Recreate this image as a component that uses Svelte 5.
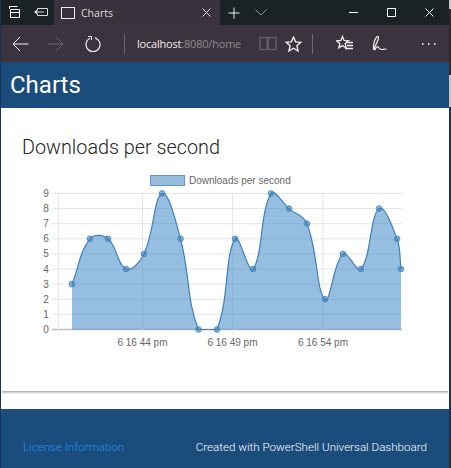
<script>
    const values = [3, 6, 6, 4, 5, 9, 6, 0, 0, 6, 4, 9, 8, 7, 2, 5, 4, 8, 6, 4];
    const xs = [72, 90, 108, 126, 144, 162, 180.5, 198.5, 217, 235, 253, 271, 289, 307, 325, 343, 361, 379, 397, 401];
    const top = 193.5;
    const bottom = 329.5;
    const step = (bottom - top) / 9;

    const points = values.map((v, i) => ({ x: xs[i], y: bottom - v * step, v }));

    // same spline as chart.js, tension 0.4
    function controls(prev, cur, next) {
        const d01 = Math.hypot(cur.x - prev.x, cur.y - prev.y);
        const d12 = Math.hypot(next.x - cur.x, next.y - cur.y);
        const s01 = d01 / (d01 + d12 || 1);
        const s12 = d12 / (d01 + d12 || 1);
        return {
            px: cur.x - 0.4 * s01 * (next.x - prev.x),
            py: cur.y - 0.4 * s01 * (next.y - prev.y),
            nx: cur.x + 0.4 * s12 * (next.x - prev.x),
            ny: cur.y + 0.4 * s12 * (next.y - prev.y),
        };
    }

    const ctrl = points.map((p, i) =>
        controls(points[i - 1] || p, p, points[i + 1] || p),
    );

    let line = `M${points[0].x} ${points[0].y}`;
    for (let i = 1; i < points.length; i++) {
        const a = ctrl[i - 1];
        const b = ctrl[i];
        const bottomClamp = (y) => Math.min(y, bottom);
        line += ` C${a.nx} ${bottomClamp(a.ny)} ${b.px} ${bottomClamp(b.py)} ${points[i].x} ${points[i].y}`;
    }
    const area = `${line} L401 ${bottom} L72 ${bottom} Z`;

    const ticks = [9, 8, 7, 6, 5, 4, 3, 2, 1, 0];
    const vlines = [58.5, 142.5, 232.5, 323];
    const times = [
        { x: 142.5, label: "6 16 44 pm" },
        { x: 232.5, label: "6 16 49 pm" },
        { x: 323, label: "6 16 54 pm" },
    ];
</script>

<div class="window">
    <div class="tabs">
        <div class="tab-tools">
            <svg width="53" height="25" viewBox="1 0 53 25" fill="none" stroke="#fff" stroke-width="1">
                <path d="M9.500 9V6.500h8M10.500 9.500h9v8h-9zM10.500 12.500h9" />
                <path d="M37.500 10.500v-2h10v7h-10v-2M44 12H35" stroke="#ddd" />
                <path d="M34 12l3-2.500v5z" fill="#ddd" stroke="none" />
            </svg>
        </div>
        <div class="tab">
            <span class="tab-box"></span>
            <span class="tab-title">Charts</span>
            <svg class="tab-x" width="9" height="9" viewBox="0 0 9 9" stroke="#ddd" fill="none"><path d="M.5 .5l8 8M8.500 .5l-8 8" /></svg>
        </div>
        <svg class="new-tab" width="12" height="12" viewBox="0 0 12 12" stroke="#eee" fill="none"><path d="M6 .5v11M.5 6h11" /></svg>
        <svg class="chev" width="12" height="7" viewBox="0 0 12 7" stroke="#999" fill="none"><path d="M.5 .5L6 6l5.500-5.500" /></svg>
        <div class="win-buttons">
            <svg width="9" height="9" viewBox="0 0 9 9" stroke="#fff" fill="none"><path d="M0 4.500h9" /></svg>
            <svg width="9" height="9" viewBox="0 0 9 9" stroke="#fff" fill="none"><path d="M.5 .5h8v8h-8z" /></svg>
            <svg width="9" height="9" viewBox="0 0 9 9" stroke="#fff" fill="none"><path d="M.5 .5l8 8M8.500 .5l-8 8" /></svg>
        </div>
    </div>

    <div class="toolbar">
        <svg class="nav" width="17" height="16" viewBox="0 0 17 16" stroke="#eee" fill="none"><path d="M16.500 8H1M8 1L1 8l7 7" /></svg>
        <svg class="nav fwd" width="17" height="16" viewBox="0 0 17 16" stroke="#6d6870" fill="none"><path d="M.5 8H16M9 1l7 7-7 7" /></svg>
        <svg class="nav refresh" width="16" height="16" viewBox="0 0 16 16" stroke="#eee" fill="none"><path d="M5 2.300A7 7 0 1 0 10 1.900" stroke-width="1.200" /><path d="M3 .5h3.500V4" /></svg>
        <span class="sep first"></span>
        <div class="url"><span>localhost</span>:8080/home</div>
        <svg width="18" height="15" viewBox="0 0 18 15" stroke="#5b6064" stroke-width="1.500" fill="none"><path d="M1 1.500h7.200v12H1zM9.200 1.500H17v12H9.200z" /></svg>
        <svg class="star" width="17" height="16" viewBox="0 0 17 16" stroke="#eee" stroke-width="1.400" fill="none"><path d="M8.500 1l2.100 4.900 5.300.4-4 3.500 1.200 5.200-4.600-2.800L3.900 15l1.200-5.200-4-3.500 5.300-.4z" /></svg>
        <span class="sep"></span>
        <svg class="favs" width="18" height="17" viewBox="0 0 18 17" stroke="#eee" fill="none"><path d="M6.500 1.500l1.600 4 4.400.3-3.300 2.800 1 4.300-3.700-2.300-3.700 2.300 1-4.300L.5 5.800l4.400-.3z" stroke-width="1.300" /><path d="M10 7.500h7M11 10.500h6M9 13.500h8" stroke-width="1.300" /></svg>
        <svg class="pen" width="16" height="17" viewBox="0 0 16 17" stroke="#eee" stroke-width="1.200" fill="none"><path d="M1.500 15C1 10 2.500 3 5.500 1.500 7.500 1 6.500 5 2.500 12.500 2 14 3 16 3.500 14c.5-2 1.500-3 2.500-2s2 2.500 3.500 2.500 2-.5 5-.5" /></svg>
        <svg class="more" width="14" height="3" viewBox="0 0 14 3" fill="#ddd"><rect x="0" y="1" width="1.500" height="2" /><rect x="6" y="1" width="1.500" height="2" /><rect x="12" y="1" width="1.500" height="2" /></svg>
    </div>

    <header class="app-bar">Charts</header>

    <main>
        <section class="card">
            <h2>Downloads per second</h2>
            <svg class="chart" width="445" height="188" viewBox="2 170 445 188">
                {#each ticks as t, i}
                    <line x1="52" x2="402" y1={top + i * step} y2={top + i * step} class:axis={t === 0} class="grid" />
                    <text x="46" y={top + i * step + 3.500} class="tick" text-anchor="middle">{t}</text>
                {/each}
                {#each vlines as x}
                    <line x1={x} x2={x} y1={top} y2={bottom + 5} class="grid" />
                {/each}

                <path d={area} class="fill" />
                <path d={line} class="stroke" />
                {#each points as p}
                    <circle cx={p.x} cy={p.y} r="2.800" class="dot" />
                {/each}

                {#each times as t}
                    <text x={t.x} y="346" class="tick" text-anchor="middle">{t.label}</text>
                {/each}

                <rect x="150.500" y="175.500" width="34" height="10" class="legend" />
                <text x="189" y="184" class="tick">Downloads per second</text>
            </svg>
        </section>
    </main>

    <footer>
        <span class="license">License Information</span>
        <span class="credit">Created with PowerShell Universal Dashboard</span>
    </footer>
</div>

<style>
    :global(body) {
        margin: 0;
        /* bits of the desktop showing beside the browser window */
        background:
            linear-gradient(
                    to bottom,
                    #c9c9cc 0 9px,
                    #2c2a2e 9px 75px,
                    #c4c6cc 75px 107px,
                    #17335a 107px 438px,
                    #2f2f33 438px
                )
                right top / 2px 100% no-repeat,
            #17335a;
    }

    .window {
        width: 448px;
        height: 468px;
        margin-left: 1px;
        display: flex;
        flex-direction: column;
        overflow: hidden;
        font-family: Roboto, sans-serif;
    }

    .tabs {
        height: 25px;
        display: flex;
        align-items: center;
        background: #1b2226;
        flex: none;
    }

    .tab-tools {
        width: 53px;
        height: 25px;
    }

    .tab {
        width: 166px;
        height: 25px;
        background: #3a323c;
        display: flex;
        align-items: center;
        padding-left: 7px;
        box-sizing: border-box;
        color: #ddd;
        font-size: 12px;
    }

    .tab-box {
        width: 12px;
        height: 10px;
        border: 1px solid #eee;
    }

    .tab-title {
        margin-left: 6px;
        font-family: "Open Sans", sans-serif;
        font-size: 10.500px;
    }

    .tab-x {
        margin-left: auto;
        margin-right: 9px;
    }

    .new-tab {
        margin-left: 8px;
    }

    .chev {
        margin-left: 15px;
    }

    .win-buttons {
        margin-left: auto;
        display: flex;
        gap: 29px;
        padding-right: 15px;
    }

    .toolbar {
        height: 37px;
        background: #3b333d;
        display: flex;
        align-items: center;
        flex: none;
        padding-left: 11px;
    }

    .nav.fwd {
        margin-left: 18px;
    }

    .nav.refresh {
        margin-left: 21px;
    }

    .sep {
        width: 1px;
        height: 20px;
        background: #6d6870;
        margin-left: 10px;
    }

    .sep.first {
        margin-left: 23px;
    }

    .url {
        width: 122px;
        margin-left: 12px;
        font-family: "Open Sans", sans-serif;
        font-size: 11px;
        letter-spacing: -0.2px;
        color: #8f8b91;
    }

    .url span {
        color: #eee;
    }

    .star {
        margin-left: 8px;
    }

    .favs {
        margin-left: 23px;
    }

    .pen {
        margin-left: 18px;
    }

    .more {
        margin-left: 34px;
    }

    .app-bar {
        height: 46px;
        flex: none;
        background: #1a4c7c;
        color: #fff;
        font-size: 24px;
        line-height: 46px;
        padding-left: 9px;
    }

    main {
        flex: 1;
        background: #fff;
    }

    .card {
        height: 283px;
        margin: 0 1px;
        box-sizing: border-box;
        padding: 27px 0 0;
        box-shadow:
            0 1px 0 #b5b5b5,
            0 2px 0 #d4d4d4,
            0 3px 0 #eeeeee;
    }

    h2 {
        margin: 0 0 0 20px;
        font-size: 19.800px;
        line-height: 26px;
        font-weight: 300;
        color: #222;
    }

    .chart {
        display: block;
        margin-top: 9px;
    }

    .grid {
        stroke: #e5e5e5;
        stroke-width: 1;
    }

    .grid.axis {
        stroke: #bdbdbd;
        stroke-width: 1.500;
    }

    .tick {
        font-family: "Liberation Sans", sans-serif;
        font-size: 10px;
        fill: #666;
    }

    .fill {
        fill: rgba(45, 125, 195, 0.5);
    }

    .stroke {
        fill: none;
        stroke: #3d80bb;
        stroke-width: 1.200;
    }

    .dot {
        fill: rgba(51, 122, 183, 0.55);
        stroke: #4a8cc4;
        stroke-width: 1;
    }

    .legend {
        fill: #97bcdd;
        stroke: #5f98c9;
    }

    footer {
        height: 59px;
        flex: none;
        background: #1a4c7c;
        display: flex;
        justify-content: space-between;
        padding: 31px 22px 0 22px;
        box-sizing: border-box;
        font-size: 11.600px;
        font-weight: 300;
    }

    .license {
        color: #2196f3;
    }

    .credit {
        color: #fff;
    }
</style>
